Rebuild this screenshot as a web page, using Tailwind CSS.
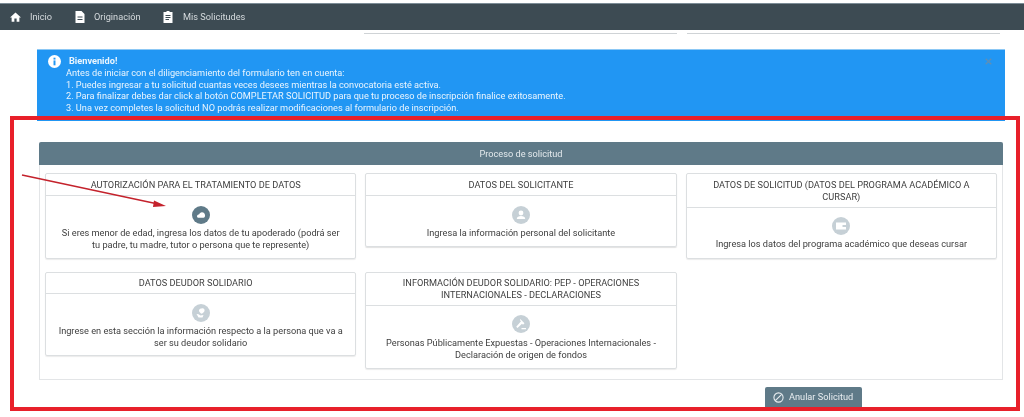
<!DOCTYPE html>
<html lang="en">
<head>
    <meta charset="UTF-8">
    <title>Proceso de solicitud</title>
    <script src="https://cdn.jsdelivr.net/npm/@tailwindcss/browser@4"></script>
</head>
<body class="bg-white">
<div class="relative w-[1024px] h-[417px] overflow-hidden bg-white font-['Roboto',sans-serif] text-[#404040] blur-[0.45px]">

    <!-- top nav -->
    <div class="mt-[3px] h-[27px] bg-[#3d4b53] border-t border-[#7c8c96] flex items-center pl-[10px] text-[9.2px] text-[#d5dadd]">
        <svg class="w-[11px] h-[10px] mr-[9px]" viewBox="0 0 24 22" fill="#fff"><path d="M12 1 0 12h3.500v9.500h6v-7h5v7h6V12H24z"/></svg>
        <span class="w-[22px] mr-[23px]">Inicio</span>
        <svg class="w-[10px] h-[12px] mr-[9px]" viewBox="0 0 20 24" fill="#fff"><path d="M1 0h12l6 6v18H1zM5 11v2h10v-2zM5 16v2h10v-2z" fill-rule="evenodd"/></svg>
        <span class="w-[47px] mr-[22px]">Originación</span>
        <svg class="w-[10px] h-[12px] mr-[10px]" viewBox="0 0 20 24" fill="#fff"><path d="M7 0h6v2h6v22H1V2h6zM5 8v2h10V8zM5 12v2h10v-2zM5 16v2h7v-2z" fill-rule="evenodd"/></svg>
        <span>Mis Solicitudes</span>
    </div>

    <!-- bottoms of the cards scrolled under the nav -->
    <div class="flex h-[4px] pl-[364px]">
        <div class="w-[313px] border-b border-[#cfd3d6]"></div>
        <div class="w-[313px] ml-[10px] border-b border-[#cfd3d6]"></div>
    </div>

    <!-- welcome alert -->
    <div class="mt-[15px] ml-[37px] w-[968px] h-[72px] bg-[#2196f3] border-t border-[#8cc8f5] flex text-[9.2px] leading-[11.8px] text-[#eaf5fe]">
        <svg class="w-[13px] h-[13px] ml-[11px] mt-[5px] shrink-0" viewBox="0 0 24 24"><circle cx="12" cy="12" r="12" fill="#fff"/><rect x="10.200" y="10" width="3.600" height="9" fill="#2196f3"/><rect x="10.200" y="5" width="3.600" height="3.400" fill="#2196f3"/></svg>
        <div class="ml-[5px] pt-[5px] flex-1">
            <div class="font-bold pl-[3px]">Bienvenido!</div>
            <div>Antes de iniciar con el diligenciamiento del formulario ten en cuenta:</div>
            <div>1. Puedes ingresar a tu solicitud cuantas veces desees mientras la convocatoria esté activa.</div>
            <div>2. Para finalizar debes dar click al botón COMPLETAR SOLICITUD para que tu proceso de inscripción finalice exitosamente.</div>
            <div>3. Una vez completes la solicitud NO podrás realizar modificaciones al formulario de inscripción.</div>
        </div>
        <svg class="w-[7px] h-[7px] mt-[8px] mr-[13px]" viewBox="0 0 10 10" stroke="#5f8fb5" stroke-width="1.800"><path d="M1 1l8 8M9 1l-8 8"/></svg>
    </div>

    <!-- process panel -->
    <div class="mt-[21px] ml-[39px] w-[964px] border border-t-0 border-[#e3e5e7] rounded-t-[2px]">
        <div class="h-[23px] -mx-px bg-[#5f7a88] flex items-center justify-center text-[9.2px] text-[#e4eaed] rounded-t-[2px]">Proceso de solicitud</div>
        <div class="grid grid-cols-3 gap-x-[9px] gap-y-[13px] items-start px-[5px] pt-[8px] pb-[10px]">

            <div class="rounded-[2px] border border-[#dcdfe1] shadow-[0_1px_1px_rgba(0,0,0,0.08)] text-center text-[9.2px] leading-[12px]">
                <div class="py-[4.5px] pl-3 pr-[22px] border-b border-[#dcdfe1]">AUTORIZACIÓN PARA EL TRATAMIENTO DE DATOS</div>
                <div class="pt-[10px] pb-[7px] px-3">
                    <svg class="w-[18px] h-[18px] mx-auto mb-[3px]" viewBox="0 0 18 18"><circle cx="9" cy="9" r="9" fill="#5f7a88"/><path d="M5 10.500c0-1.400 1-2 2-2 .4-1.300 1.600-2.300 3-2.300 1.600 0 2.900 1.200 3 2.800.3 1.300-.3 2.500-1.500 2.800H7c-1.200 0-2-.4-2-1.300z" fill="#fff"/></svg>
                    Si eres menor de edad, ingresa los datos de tu apoderado (podrá ser tu padre, tu madre, tutor o persona que te represente)
                </div>
            </div>

            <div class="rounded-[2px] border border-[#dcdfe1] shadow-[0_1px_1px_rgba(0,0,0,0.12)] text-center text-[9.2px] leading-[12px]">
                <div class="py-[4.5px] px-3 border-b border-[#dcdfe1]">DATOS DEL SOLICITANTE</div>
                <div class="pt-[10px] pb-[7px] px-3">
                    <svg class="w-[18px] h-[18px] mx-auto mb-[3px]" viewBox="0 0 18 18"><circle cx="9" cy="9" r="9" fill="#c6d0d6"/><circle cx="9" cy="7" r="2.400" fill="#fff"/><path d="M4.800 13c0-2.200 2-3 4.200-3s4.200.8 4.200 3z" fill="#fff"/></svg>
                    Ingresa la información personal del solicitante
                </div>
            </div>

            <div class="rounded-[2px] border border-[#dcdfe1] shadow-[0_1px_1px_rgba(0,0,0,0.08)] text-center text-[9.2px] leading-[12px]">
                <div class="py-[4.5px] px-3 border-b border-[#dcdfe1]">DATOS DE SOLICITUD (DATOS DEL PROGRAMA ACADÉMICO A CURSAR)</div>
                <div class="pt-[9px] pb-[8px] px-3">
                    <svg class="w-[18px] h-[18px] mx-auto mb-[3px]" viewBox="0 0 18 18"><circle cx="9" cy="9" r="9" fill="#c6d0d6"/><path d="M4 5.500h10v7H4zM10.500 8v2H14V8z" fill="#fff" fill-rule="evenodd"/></svg>
                    Ingresa los datos del programa académico que deseas cursar
                </div>
            </div>

            <div class="rounded-[2px] border border-[#dcdfe1] shadow-[0_1px_1px_rgba(0,0,0,0.08)] text-center text-[9.2px] leading-[12px]">
                <div class="py-[4px] pl-3 pr-[22px] border-b border-[#dcdfe1]">DATOS DEUDOR SOLIDARIO</div>
                <div class="pt-[10px] pb-[6px] px-3">
                    <svg class="w-[18px] h-[18px] mx-auto mb-[3px]" viewBox="0 0 18 18"><circle cx="9" cy="9" r="9" fill="#c6d0d6"/><path d="M9.500 4.500c1.800-.8 3.500.6 3 2.500-.3 1.100-1.500 2-3 2.700-1-.7-2.200-1.500-2.500-2.700-.3-1.500 1.300-3 2.500-2.500z" fill="#fff"/><path d="M4.500 10l2 .2 2 1.300 3-.5-1 2.500H6.500z" fill="#fff"/></svg>
                    Ingrese en esta sección la información respecto a la persona que va a ser su deudor solidario
                </div>
            </div>

            <div class="rounded-[2px] border border-[#dcdfe1] shadow-[0_1px_1px_rgba(0,0,0,0.08)] text-center text-[9.2px] leading-[12px]">
                <div class="py-[4px] px-3 border-b border-[#dcdfe1]">INFORMACIÓN DEUDOR SOLIDARIO: PEP - OPERACIONES INTERNACIONALES - DECLARACIONES</div>
                <div class="pt-[9px] pb-[7px] px-3">
                    <svg class="w-[18px] h-[18px] mx-auto mb-[4px]" viewBox="0 0 18 18"><circle cx="9" cy="9" r="9" fill="#c6d0d6"/><path d="M8.300 4l4.200 4.200-1.500 1.500-1-1-4.500 4.300-1.300-1.300L9 6.200l-1-1zM9.500 13h4.500v1.300H9.500z" fill="#fff"/></svg>
                    Personas Públicamente Expuestas - Operaciones Internacionales - Declaración de origen de fondos
                </div>
            </div>
        </div>
    </div>

    <!-- cancel button -->
    <div class="flex justify-end pr-[162px] mt-[7px]">
        <div class="h-[22px] w-[97px] bg-[#5f7a88] rounded-[2px] flex items-center pl-[8px] pb-[2px] text-[9.2px] text-[#e8edf0]">
            <svg class="w-[11px] h-[11px] mr-[5px]" viewBox="0 0 12 12" fill="none" stroke="#e8edf0" stroke-width="1.200"><circle cx="6" cy="6" r="5"/><path d="M2.500 9.500l7-7"/></svg>
            Anular Solicitud
        </div>
    </div>

    <!-- red annotation frame and arrow drawn over the screenshot -->
    <div class="absolute left-[10px] top-[116px] w-[1010px] h-[295px] border-[4px] border-[#e8202a]"></div>
    <svg class="absolute left-0 top-0 w-[1024px] h-[417px]" viewBox="0 0 1024 417" fill="none">
        <path d="M22 175 158 204" stroke="#c4222c" stroke-width="1.500"/>
        <path d="M166 206 154 200.500 153 207z" fill="#c4222c"/>
    </svg>
</div>
</body>
</html>
